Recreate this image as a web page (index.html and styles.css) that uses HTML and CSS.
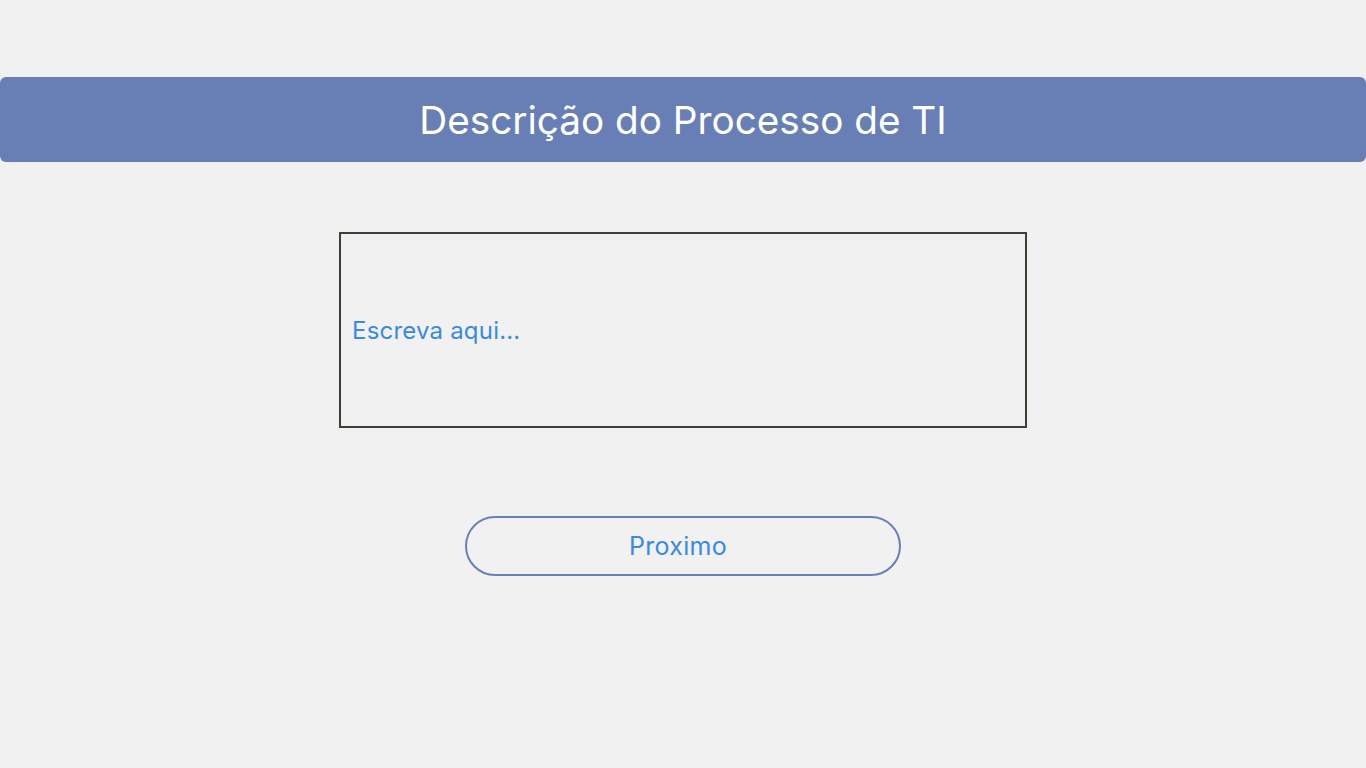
FILE: index.html
```html
<!DOCTYPE html>
<html lang="pt">
<head>
<meta charset="utf-8">
<title>Descrição do Processo de TI</title>
<link rel="stylesheet" href="styles.css">
</head>
<body>
<main class="page">
  <header class="banner">
    <h1 class="banner-title">Descrição do Processo de TI</h1>
  </header>
  <section class="editor">
    <textarea class="editor-box" placeholder="Escreva aqui..."></textarea>
  </section>
  <div class="actions">
    <button class="next-btn" type="button">Proximo</button>
  </div>
</main>
</body>
</html>
```
FILE: styles.css
```css
html, body {
  margin: 0;
  padding: 0;
  background: #f1f1f1;
  font-family: "Inter", "Noto Sans", sans-serif;
}
.page {
  width: 1366px;
  height: 768px;
  padding-top: 77px;
  box-sizing: border-box;
  display: flex;
  flex-direction: column;
  align-items: center;
}
.banner {
  width: 1366px;
  height: 85px;
  background: #687fb6;
  border-radius: 6px;
  display: flex;
  align-items: center;
  justify-content: center;
}
.banner-title {
  margin: 0;
  color: #ffffff;
  font-weight: 400;
  font-size: 38.7px;
  letter-spacing: 0;
}
.editor {
  margin-top: 70px;
  width: 688px;
  display: flex;
}
.editor-box {
  width: 688px;
  height: 196px;
  box-sizing: border-box;
  border: 2px solid #3f3f33;
  border-radius: 0;
  background: #f1f1f1;
  resize: none;
  padding: 82px 12px 0 11px;
  font-family: "Inter", "Noto Sans", sans-serif;
  font-size: 24px;
  letter-spacing: 0.2px;
  color: #3a8bdb;
  outline: none;
}
.editor-box::placeholder {
  color: #3a8bdb;
  opacity: 1;
}
.actions {
  margin-top: 88px;
  display: flex;
  justify-content: center;
}
.next-btn {
  width: 436px;
  height: 60px;
  box-sizing: border-box;
  border: 2px solid #6a7fb8;
  border-radius: 30px;
  background: transparent;
  font-family: "Inter", "Noto Sans", sans-serif;
  font-size: 25px;
  letter-spacing: 0.3px;
  color: #3a8bdb;
  padding: 0 10px 0 0;
}
```
